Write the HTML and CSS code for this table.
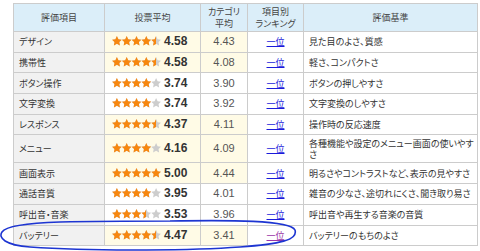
FILE: index.html
```html
<!DOCTYPE html>
<html lang="ja">
<head>
<meta charset="utf-8">
<title>評価</title>
<link rel="stylesheet" href="styles.css">
</head>
<body>
<svg class="defs" width="0" height="0" aria-hidden="true">
  <symbol id="s5" viewBox="0 0 50 10">
    <g>
      <polygon points="5,0 6.53,3.2 9.95,3.6 7.47,6.1 8.06,9.5 5,7.9 1.94,9.5 2.53,6.1 0.05,3.6 3.47,3.2"/>
      <polygon transform="translate(10 0)" points="5,0 6.53,3.2 9.95,3.6 7.47,6.1 8.06,9.5 5,7.9 1.94,9.5 2.53,6.1 0.05,3.6 3.47,3.2"/>
      <polygon transform="translate(20 0)" points="5,0 6.53,3.2 9.95,3.6 7.47,6.1 8.06,9.5 5,7.9 1.94,9.5 2.53,6.1 0.05,3.6 3.47,3.2"/>
      <polygon transform="translate(30 0)" points="5,0 6.53,3.2 9.95,3.6 7.47,6.1 8.06,9.5 5,7.9 1.94,9.5 2.53,6.1 0.05,3.6 3.47,3.2"/>
      <polygon transform="translate(40 0)" points="5,0 6.53,3.2 9.95,3.6 7.47,6.1 8.06,9.5 5,7.9 1.94,9.5 2.53,6.1 0.05,3.6 3.47,3.2"/>
    </g>
  </symbol>
</svg>
<div class="wrap">
<table class="eval">
  <colgroup><col class="c1"><col class="c2"><col class="c3"><col class="c4"><col class="c5"></colgroup>
  <thead>
    <tr><th>評価項目</th><th>投票平均</th><th>カテゴリ<br>平均</th><th>項目別<br>ランキング</th><th>評価基準</th></tr>
  </thead>
  <tbody>
    <tr class="hi"><td class="item">デザイン</td><td class="vote"><span class="stars"><svg class="bg"><use href="#s5"/></svg><span class="fg" style="width:44.1px"><svg><use href="#s5"/></svg></span></span><b>4.58</b></td><td class="cat">4.43</td><td class="rank"><a href="#">一位</a></td><td class="desc">見た目のよさ、質感</td></tr>
    <tr class="hi"><td class="item">携帯性</td><td class="vote"><span class="stars"><svg class="bg"><use href="#s5"/></svg><span class="fg" style="width:44.1px"><svg><use href="#s5"/></svg></span></span><b>4.58</b></td><td class="cat">4.08</td><td class="rank"><a href="#">一位</a></td><td class="desc">軽さ、コンパクトさ</td></tr>
    <tr><td class="item">ボタン操作</td><td class="vote"><span class="stars"><svg class="bg"><use href="#s5"/></svg><span class="fg" style="width:39.2px"><svg><use href="#s5"/></svg></span></span><b>3.74</b></td><td class="cat">3.90</td><td class="rank"><a href="#">一位</a></td><td class="desc">ボタンの押しやすさ</td></tr>
    <tr><td class="item">文字変換</td><td class="vote"><span class="stars"><svg class="bg"><use href="#s5"/></svg><span class="fg" style="width:39.2px"><svg><use href="#s5"/></svg></span></span><b>3.74</b></td><td class="cat">3.92</td><td class="rank"><a href="#">一位</a></td><td class="desc">文字変換のしやすさ</td></tr>
    <tr class="hi"><td class="item">レスポンス</td><td class="vote"><span class="stars"><svg class="bg"><use href="#s5"/></svg><span class="fg" style="width:44.1px"><svg><use href="#s5"/></svg></span></span><b>4.37</b></td><td class="cat">4.11</td><td class="rank"><a href="#">一位</a></td><td class="desc">操作時の反応速度</td></tr>
    <tr class="hi tall"><td class="item">メニュー</td><td class="vote"><span class="stars"><svg class="bg"><use href="#s5"/></svg><span class="fg" style="width:39.2px"><svg><use href="#s5"/></svg></span></span><b>4.16</b></td><td class="cat">4.09</td><td class="rank"><a href="#">一位</a></td><td class="desc">各種機能や設定のメニュー画面の使いやすさ</td></tr>
    <tr class="hi"><td class="item">画面表示</td><td class="vote"><span class="stars"><svg class="bg"><use href="#s5"/></svg><span class="fg" style="width:49px"><svg><use href="#s5"/></svg></span></span><b>5.00</b></td><td class="cat">4.44</td><td class="rank"><a href="#">一位</a></td><td class="desc">明るさやコントラストなど、表示の見やすさ</td></tr>
    <tr><td class="item">通話音質</td><td class="vote"><span class="stars"><svg class="bg"><use href="#s5"/></svg><span class="fg" style="width:39.2px"><svg><use href="#s5"/></svg></span></span><b>3.95</b></td><td class="cat">4.01</td><td class="rank"><a href="#">一位</a></td><td class="desc">雑音の少なさ、途切れにくさ、聞き取り易さ</td></tr>
    <tr><td class="item">呼出音・音楽</td><td class="vote"><span class="stars"><svg class="bg"><use href="#s5"/></svg><span class="fg" style="width:34.3px"><svg><use href="#s5"/></svg></span></span><b>3.53</b></td><td class="cat">3.96</td><td class="rank"><a href="#">一位</a></td><td class="desc">呼出音や再生する音楽の音質</td></tr>
    <tr class="hi"><td class="item">バッテリー</td><td class="vote"><span class="stars"><svg class="bg"><use href="#s5"/></svg><span class="fg" style="width:44.1px"><svg><use href="#s5"/></svg></span></span><b>4.47</b></td><td class="cat">3.41</td><td class="rank"><a href="#" class="visited">一位</a></td><td class="desc">バッテリーのもちのよさ</td></tr>
  </tbody>
</table>
</div>
<svg class="mark" width="480" height="251" viewBox="0 0 480 251" aria-hidden="true">
  <path d="M170 221 C230 220 290 220 295 230 C298 240 280 244 240 247 C200 250 100 252 30 247 C5 245 -2 238 2 232 C6 226 30 223 60 222 C100 221 140 221 172 221"/>
</svg>
</body>
</html>
```
FILE: styles.css
```css
html, body {
  margin: 0;
  padding: 0;
  background: #fff;
}
body {
  width: 480px;
  height: 251px;
  overflow: hidden;
  position: relative;
  font-family: "Noto Sans CJK JP", sans-serif;
  color: #333;
}
.defs {
  position: absolute;
  width: 0;
  height: 0;
}
.wrap {
  padding: 3px 0 0 13px;
}
.eval {
  border-collapse: collapse;
  table-layout: fixed;
  width: 464px;
  font-size: 9px;
  line-height: 11px;
  font-feature-settings: "palt";
}
.c1 { width: 91px; }
.c2 { width: 96px; }
.c3 { width: 47px; }
.c4 { width: 56px; }
.c5 { width: 174px; }
.eval th, .eval td {
  border: 1px solid #cccccc;
  padding: 0;
  vertical-align: middle;
}
.eval thead tr { height: 28px; }
.eval th {
  background: #dbeef9;
  font-weight: normal;
  color: #444;
  text-align: center;
  line-height: 12px;
}
.eval tbody tr { height: 20.7px; }
.eval tbody tr.tall { height: 28px; }
.item {
  background: #f1f1f1;
  padding-left: 5px !important;
}
.vote {
  padding-left: 7px !important;
  white-space: nowrap;
}
.hi .vote, .hi .cat { background: #fffbe6; }
.stars {
  position: relative;
  display: inline-block;
  width: 49px;
  height: 10px;
  vertical-align: -1px;
}
.stars svg {
  display: block;
  width: 49px;
  height: 10px;
}
.stars .bg { fill: #cdcdcd; }
.stars .fg {
  position: absolute;
  left: 0;
  top: 0;
  height: 10px;
  overflow: hidden;
  fill: #f7870f;
}
.vote b {
  font-family: "Liberation Sans", Arial, sans-serif;
  font-size: 12px;
  font-weight: bold;
  color: #333;
  margin-left: 3px;
}
.cat {
  text-align: center;
  font-family: "Liberation Sans", Arial, sans-serif;
  font-size: 11px;
  color: #555;
}
.rank { text-align: center; }
.rank a {
  color: #1a1adb;
  text-decoration: underline;
}
.rank a.visited { color: #9a35a6; }
.desc {
  padding-left: 5px !important;
}
.mark {
  position: absolute;
  left: 0;
  top: 0;
  pointer-events: none;
}
.mark path {
  fill: none;
  stroke: #1d35d2;
  stroke-width: 1.6;
}
```
